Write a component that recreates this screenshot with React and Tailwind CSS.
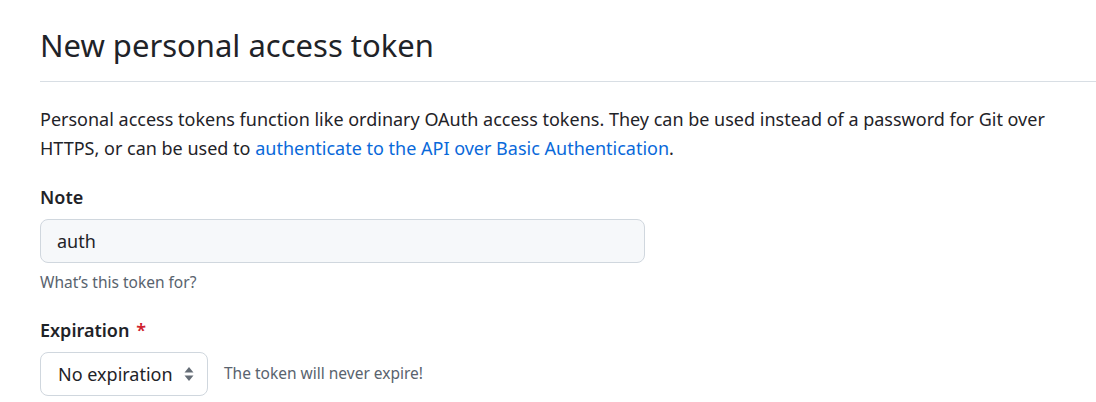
import React from "react";

export default function App() {
  return (
    <div className="w-[1096px] h-[402px] bg-white overflow-hidden pl-10 text-[#1f2328]" style={{ fontFamily: '"Noto Sans", "Liberation Sans", sans-serif' }}>
      <div className="pt-[25px] pb-[16px] border-b border-[#d8dee4]">
        <h1 className="text-[31px] leading-[40px] font-normal">New personal access token</h1>
      </div>
      <p className="mt-[23px] text-[18px] leading-[29px] pr-10">
        Personal access tokens function like ordinary OAuth access tokens. They can be used instead of a password for Git over
        <br />
        HTTPS, or can be used to <a className="text-[#0969da]">authenticate to the API over Basic Authentication</a>.
      </p>
      <div className="mt-[22px]">
        <div className="text-[18px] leading-[24px] font-semibold">Note</div>
        <div className="mt-[10px] w-[605px] h-[44px] rounded-[8px] border border-[#d0d7de] bg-[#f6f8fa] flex items-center px-[16px] text-[18px]">auth</div>
        <div className="mt-[8px] text-[15.5px] leading-[22px] text-[#59636e]">What’s this token for?</div>
      </div>
      <div className="mt-[25px]">
        <div className="text-[18px] leading-[24px] font-semibold">
          Expiration <span className="ml-[2px] text-[#cf222e]">*</span>
        </div>
        <div className="mt-[10px] flex items-center">
          <div className="w-[168px] h-[44px] rounded-[8px] border border-[#d0d7de] bg-white flex items-center pl-[17px] pr-[12px] justify-between text-[18px]">
            <span>No expiration</span>
            <svg width="12" height="18" viewBox="0 0 12 18">
              <path d="M6 2 L10.5 7.5 H1.5 Z" fill="#656d76" />
              <path d="M6 16 L10.5 10.5 H1.5 Z" fill="#656d76" />
            </svg>
          </div>
          <span className="ml-[16px] text-[15.5px] text-[#59636e]">The token will never expire!</span>
        </div>
      </div>
    </div>
  );
}
